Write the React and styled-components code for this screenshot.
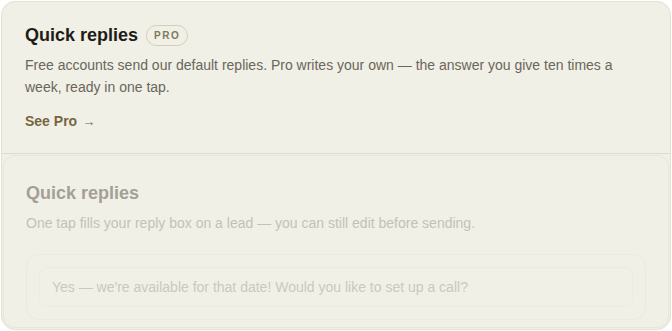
import React from "react";
import styled, { createGlobalStyle } from "styled-components";

const Global = createGlobalStyle`
  html, body { margin: 0; padding: 0; background: #ffffff; }
  body { font-family: "Liberation Sans", Arial, sans-serif; }
  * { box-sizing: border-box; }
`;

const Card = styled.div`
  margin: 1px;
  width: 670px;
  height: 329px;
  border: 1px solid #e3e1d6;
  border-radius: 14px;
  background: #f1f0e7;
  overflow: hidden;
  display: flex;
  flex-direction: column;
`;

const Upsell = styled.section`
  padding: 21px 23px 21px 23px;
  border-bottom: 1px solid #dedcd1;
  display: flex;
  flex-direction: column;
`;

const TitleRow = styled.div`
  display: flex;
  align-items: center;
  gap: 8px;
  height: 24px;
`;

const Title = styled.h2`
  margin: 0;
  font-size: 18px;
  font-weight: 700;
  line-height: 24px;
  color: ${(p) => (p.$muted ? "#a3a096" : "#1e1c17")};
`;

const Badge = styled.span`
  display: inline-flex;
  align-items: center;
  height: 21px;
  padding: 0 7px;
  border: 1px solid #d5cfb7;
  border-radius: 999px;
  font-size: 10px;
  font-weight: 700;
  letter-spacing: 1.5px;
  color: #80785c;
`;

const Body = styled.p`
  margin: 7px 0 0;
  font-size: 14px;
  line-height: 22px;
  color: ${(p) => (p.$muted ? "#c3c1b8" : "#6a665b")};
`;

const Link = styled.a`
  margin-top: 13px;
  font-size: 14px;
  font-weight: 700;
  line-height: 20px;
  color: #766641;
  text-decoration: none;
  display: inline-flex;
  align-items: baseline;
  gap: 5px;
`;

const Arrow = styled.span`
  font-weight: 400;
  font-size: 13px;
  color: #766641;
`;

const Locked = styled.div`
  flex: 1;
  padding: 1px;
`;

const Preview = styled.section`
  height: 100%;
  border: 1px solid #e7e5dc;
  border-radius: 12px;
  padding: 25px 22px 0 22px;
  display: flex;
  flex-direction: column;
`;

const List = styled.div`
  margin-top: 20px;
  border: 1px solid #ebe9e0;
  border-radius: 12px;
  padding: 12px;
`;

const Item = styled.div`
  border: 1px solid #ecebe3;
  border-radius: 8px;
  padding: 10px 12px;
  font-size: 14px;
  line-height: 18px;
  color: #cac8bf;
  height: 40px;
`;

export default function App() {
  return (
    <>
      <Global />
      <Card>
        <Upsell>
          <TitleRow>
            <Title>Quick replies</Title>
            <Badge>PRO</Badge>
          </TitleRow>
          <Body>
            Free accounts send our default replies. Pro writes your own — the answer you give ten times a
            week, ready in one tap.
          </Body>
          <Link href="#">
            See Pro <Arrow>→</Arrow>
          </Link>
        </Upsell>
        <Locked>
          <Preview>
            <Title $muted>Quick replies</Title>
            <Body $muted>One tap fills your reply box on a lead — you can still edit before sending.</Body>
            <List>
              <Item>Yes — we're available for that date! Would you like to set up a call?</Item>
            </List>
          </Preview>
        </Locked>
      </Card>
    </>
  );
}
